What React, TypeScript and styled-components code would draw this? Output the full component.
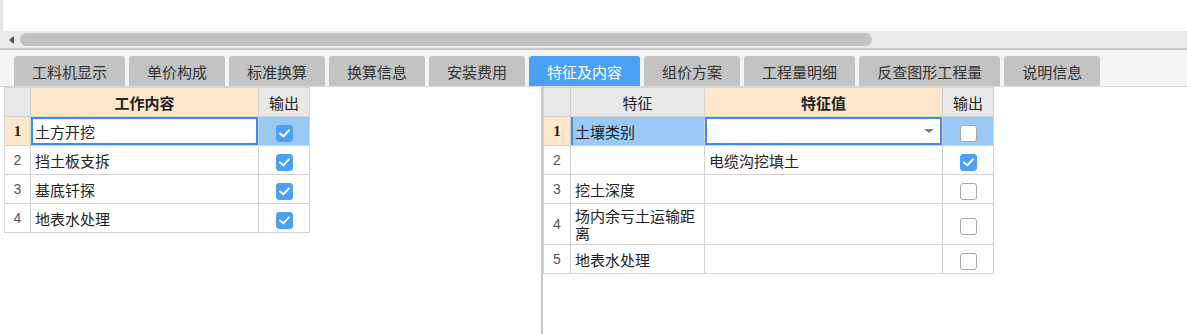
import React from 'react'
import styled, { createGlobalStyle } from 'styled-components'

const GlobalStyle = createGlobalStyle`
  html, body {
    margin: 0;
    padding: 0;
    background: #ffffff;
    font-family: "Noto Sans CJK SC", "Noto Sans", sans-serif;
    overflow: hidden;
  }
`

// styled-components
const Page = styled.div`
  width: 1187px;
  height: 334px;
  display: flex;
  flex-direction: column;
  background: #ffffff;
`

const TopBlank = styled.div`
  height: 31px;
  border-left: 3px solid #e6e6e6;
  box-sizing: border-box;
`

const ScrollTrack = styled.div`
  height: 17px;
  background: #e9e9e9;
  border-bottom: 2px solid #c6c6c6;
  display: flex;
  align-items: center;
  padding-left: 9px;
  gap: 6px;
`

const Arrow = styled.span`
  width: 0;
  height: 0;
  border-top: 4px solid transparent;
  border-bottom: 4px solid transparent;
  border-right: 5px solid #505050;
`

const Thumb = styled.div`
  width: 852px;
  height: 13px;
  border-radius: 7px;
  background: #c2c2c2;
`

const TabStrip = styled.div`
  height: 37px;
  box-sizing: border-box;
  background: #f3f3f3;
  border-bottom: 1px solid #d8d8d8;
  display: flex;
  align-items: flex-end;
  padding-left: 14px;
  gap: 4px;
`

const Tab = styled.div<{ $active?: boolean }>`
  height: 30px;
  box-sizing: border-box;
  padding: 0 18px;
  display: flex;
  align-items: center;
  justify-content: center;
  border-radius: 3px 3px 0 0;
  font-size: 15px;
  color: ${p => (p.$active ? '#ffffff' : '#333333')};
  background: ${p => (p.$active ? '#4ba0f6' : '#c3c3c3')};
  white-space: nowrap;
`

const Content = styled.div`
  flex: 1;
  display: flex;
  min-height: 0;
`

const LeftPane = styled.div`
  width: 541px;
  padding-left: 4px;
  box-sizing: border-box;
`

const Splitter = styled.div`
  width: 2px;
  background: #c8c8c8;
`

const RightPane = styled.div`
  flex: 1;
`

const Grid = styled.table<{ $width: number }>`
  width: ${p => p.$width}px;
  border-collapse: collapse;
  table-layout: fixed;
  font-size: 15px;
  color: #222222;
`

const Head = styled.th<{ $tone: 'gray' | 'peach'; $bold?: boolean }>`
  height: 28px;
  padding: 0;
  border: 1px solid #d2d2d2;
  background: ${p => (p.$tone === 'peach' ? '#fde6c9' : '#e8e8e8')};
  font-weight: ${p => (p.$bold ? 700 : 400)};
  text-align: center;
  color: #222222;
`

const NumCell = styled.td<{ $current?: boolean }>`
  padding: 0;
  border: 1px solid #d2d2d2;
  text-align: center;
  background: ${p => (p.$current ? '#fde6c9' : '#ffffff')};
  font-family: ${p => (p.$current ? '"Liberation Serif", serif' : '"Liberation Sans", sans-serif')};
  font-weight: ${p => (p.$current ? 700 : 400)};
  font-size: ${p => (p.$current ? '15px' : '14px')};
  color: ${p => (p.$current ? '#222222' : '#555555')};
`

const TextCell = styled.td<{ $tall?: boolean; $selected?: boolean; $editing?: boolean }>`
  height: ${p => (p.$tall ? 40 : 28)}px;
  padding: 0 4px;
  border: 1px solid #d2d2d2;
  line-height: 17px;
  background: ${p => (p.$selected ? '#99c9f4' : '#ffffff')};
  box-shadow: ${p =>
    p.$editing
      ? 'inset 0 0 0 2px #3d8ee8'
      : p.$selected
      ? 'inset 2px 0 0 #3d8ee8'
      : 'none'};
  position: relative;
`

const CheckCell = styled.td<{ $selected?: boolean }>`
  padding: 0;
  border: 1px solid #d2d2d2;
  text-align: center;
  background: ${p => (p.$selected ? '#99c9f4' : '#ffffff')};
`

const Box = styled.span<{ $checked: boolean }>`
  display: inline-flex;
  align-items: center;
  justify-content: center;
  width: 17px;
  height: 17px;
  box-sizing: border-box;
  border-radius: 3px;
  vertical-align: middle;
  background: ${p => (p.$checked ? '#4ba0f6' : '#ffffff')};
  border: 1px solid ${p => (p.$checked ? '#4ba0f6' : '#a8a8a8')};
`

const DropArrow = styled.span`
  position: absolute;
  right: 8px;
  top: 50%;
  margin-top: -2px;
  width: 0;
  height: 0;
  border-left: 5px solid transparent;
  border-right: 5px solid transparent;
  border-top: 4px solid #5b86b3;
`

function Check({ checked }: { checked: boolean }) {
  return (
    <Box $checked={checked}>
      {checked && (
        <svg width="11" height="9" viewBox="0 0 10 8">
          <path d="M1 4 L4 6.6 L9 1.2" fill="none" stroke="#ffffff" strokeWidth="1.8" strokeLinecap="round" strokeLinejoin="round" />
        </svg>
      )}
    </Box>
  )
}

const tabs = ['工料机显示', '单价构成', '标准换算', '换算信息', '安装费用', '特征及内容', '组价方案', '工程量明细', '反查图形工程量', '说明信息']

const works = ['土方开挖', '挡土板支拆', '基底钎探', '地表水处理']

interface IFeature {
  name: string
  value: string
  out: boolean
  tall?: boolean
}

const features: IFeature[] = [
  { name: '土壤类别', value: '', out: false },
  { name: '', value: '电缆沟挖填土', out: true },
  { name: '挖土深度', value: '', out: false },
  { name: '场内余亏土运输距离', value: '', out: false, tall: true },
  { name: '地表水处理', value: '', out: false },
]

function App() {
  return (
    <Page>
      <GlobalStyle />
      <TopBlank />
      <ScrollTrack>
        <Arrow />
        <Thumb />
      </ScrollTrack>
      <TabStrip>
        {tabs.map(t => (
          <Tab key={t} $active={t === '特征及内容'}>{t}</Tab>
        ))}
      </TabStrip>
      <Content>
        <LeftPane>
          <Grid $width={305}>
            <colgroup>
              <col style={{ width: 26 }} />
              <col style={{ width: 228 }} />
              <col style={{ width: 51 }} />
            </colgroup>
            <thead>
              <tr>
                <Head $tone="gray" />
                <Head $tone="peach" $bold>工作内容</Head>
                <Head $tone="gray">输出</Head>
              </tr>
            </thead>
            <tbody>
              {works.map((w, i) => (
                <tr key={w}>
                  <NumCell $current={i === 0}>{i + 1}</NumCell>
                  <TextCell $editing={i === 0}>{w}</TextCell>
                  <CheckCell $selected={i === 0}>
                    <Check checked />
                  </CheckCell>
                </tr>
              ))}
            </tbody>
          </Grid>
        </LeftPane>
        <Splitter />
        <RightPane>
          <Grid $width={450}>
            <colgroup>
              <col style={{ width: 27 }} />
              <col style={{ width: 134 }} />
              <col style={{ width: 238 }} />
              <col style={{ width: 51 }} />
            </colgroup>
            <thead>
              <tr>
                <Head $tone="gray" />
                <Head $tone="gray">特征</Head>
                <Head $tone="peach" $bold>特征值</Head>
                <Head $tone="gray">输出</Head>
              </tr>
            </thead>
            <tbody>
              {features.map((f, i) => (
                <tr key={i}>
                  <NumCell $current={i === 0}>{i + 1}</NumCell>
                  <TextCell $tall={f.tall} $selected={i === 0}>{f.name}</TextCell>
                  <TextCell $tall={f.tall} $editing={i === 0}>
                    {f.value}
                    {i === 0 && <DropArrow />}
                  </TextCell>
                  <CheckCell $selected={i === 0}>
                    <Check checked={f.out} />
                  </CheckCell>
                </tr>
              ))}
            </tbody>
          </Grid>
        </RightPane>
      </Content>
    </Page>
  )
}

export default App
